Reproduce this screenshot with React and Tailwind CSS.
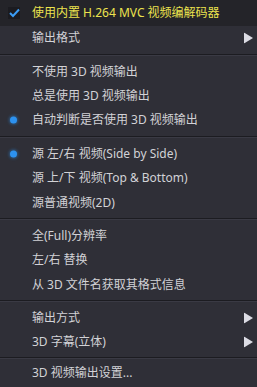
import React from "react";

const font = { fontFamily: '"Noto Sans", "Noto Sans CJK SC", sans-serif' };

const Arrow = () => (
  <svg width="9" height="11" viewBox="0 0 9 11" className="absolute right-[4px] top-1/2 -translate-y-1/2">
    <path d="M0 0 L9 5.5 L0 11 Z" fill="#dcdce4" />
  </svg>
);

const Bullet = () => (
  <span className="absolute left-[10px] top-1/2 -translate-y-1/2 w-[7px] h-[7px] rounded-full bg-[#2d92f0] shadow-[0_0_3px_1px_rgba(45,146,240,0.45)]" />
);

const Item = ({ label, bullet, arrow }) => (
  <div className="relative h-[24.4px] flex items-center pl-[32px] text-[12px] text-[#d2d2d6]">
    {bullet && <Bullet />}
    <span>{label}</span>
    {arrow && <Arrow />}
  </div>
);

const Sep = ({ small }) => (
  <div className={`${small ? "h-[6px]" : "h-[9px]"} flex flex-col justify-center`}>
    <div className="h-px bg-[#1c1c21]" />
    <div className="h-px bg-[#3a3a44]" />
  </div>
);

export default function App() {
  return (
    <div className="w-[257px] h-[387px] bg-[#2f2f37] overflow-hidden" style={font}>
      <div className="relative h-[26px] flex items-center pl-[32px] bg-[#242429] text-[12px] text-[#ece34e]">
        <span className="absolute left-[8px] top-[7px] w-[12px] h-[12px] bg-[#1b1b20] flex items-center justify-center">
          <svg width="11" height="10" viewBox="0 0 11 10">
            <path d="M1 5 L4 8 L10 1.5" stroke="#3b9cf5" strokeWidth="2" fill="none" />
          </svg>
        </span>
        <span>使用内置 H.264 MVC 视频编解码器</span>
      </div>
      <Item label="输出格式" arrow />
      <Sep />
      <Item label="不使用 3D 视频输出" />
      <Item label="总是使用 3D 视频输出" />
      <Item label="自动判断是否使用 3D 视频输出" bullet />
      <Sep />
      <Item label="源 左/右 视频(Side by Side)" bullet />
      <Item label="源 上/下 视频(Top & Bottom)" />
      <Item label="源普通视频(2D)" />
      <Sep />
      <Item label="全(Full)分辨率" />
      <Item label="左/右 替换" />
      <Item label="从 3D 文件名获取其格式信息" />
      <Sep />
      <Item label="输出方式" arrow />
      <Item label="3D 字幕(立体)" arrow />
      <Sep small />
      <Item label="3D 视频输出设置..." />
    </div>
  );
}
